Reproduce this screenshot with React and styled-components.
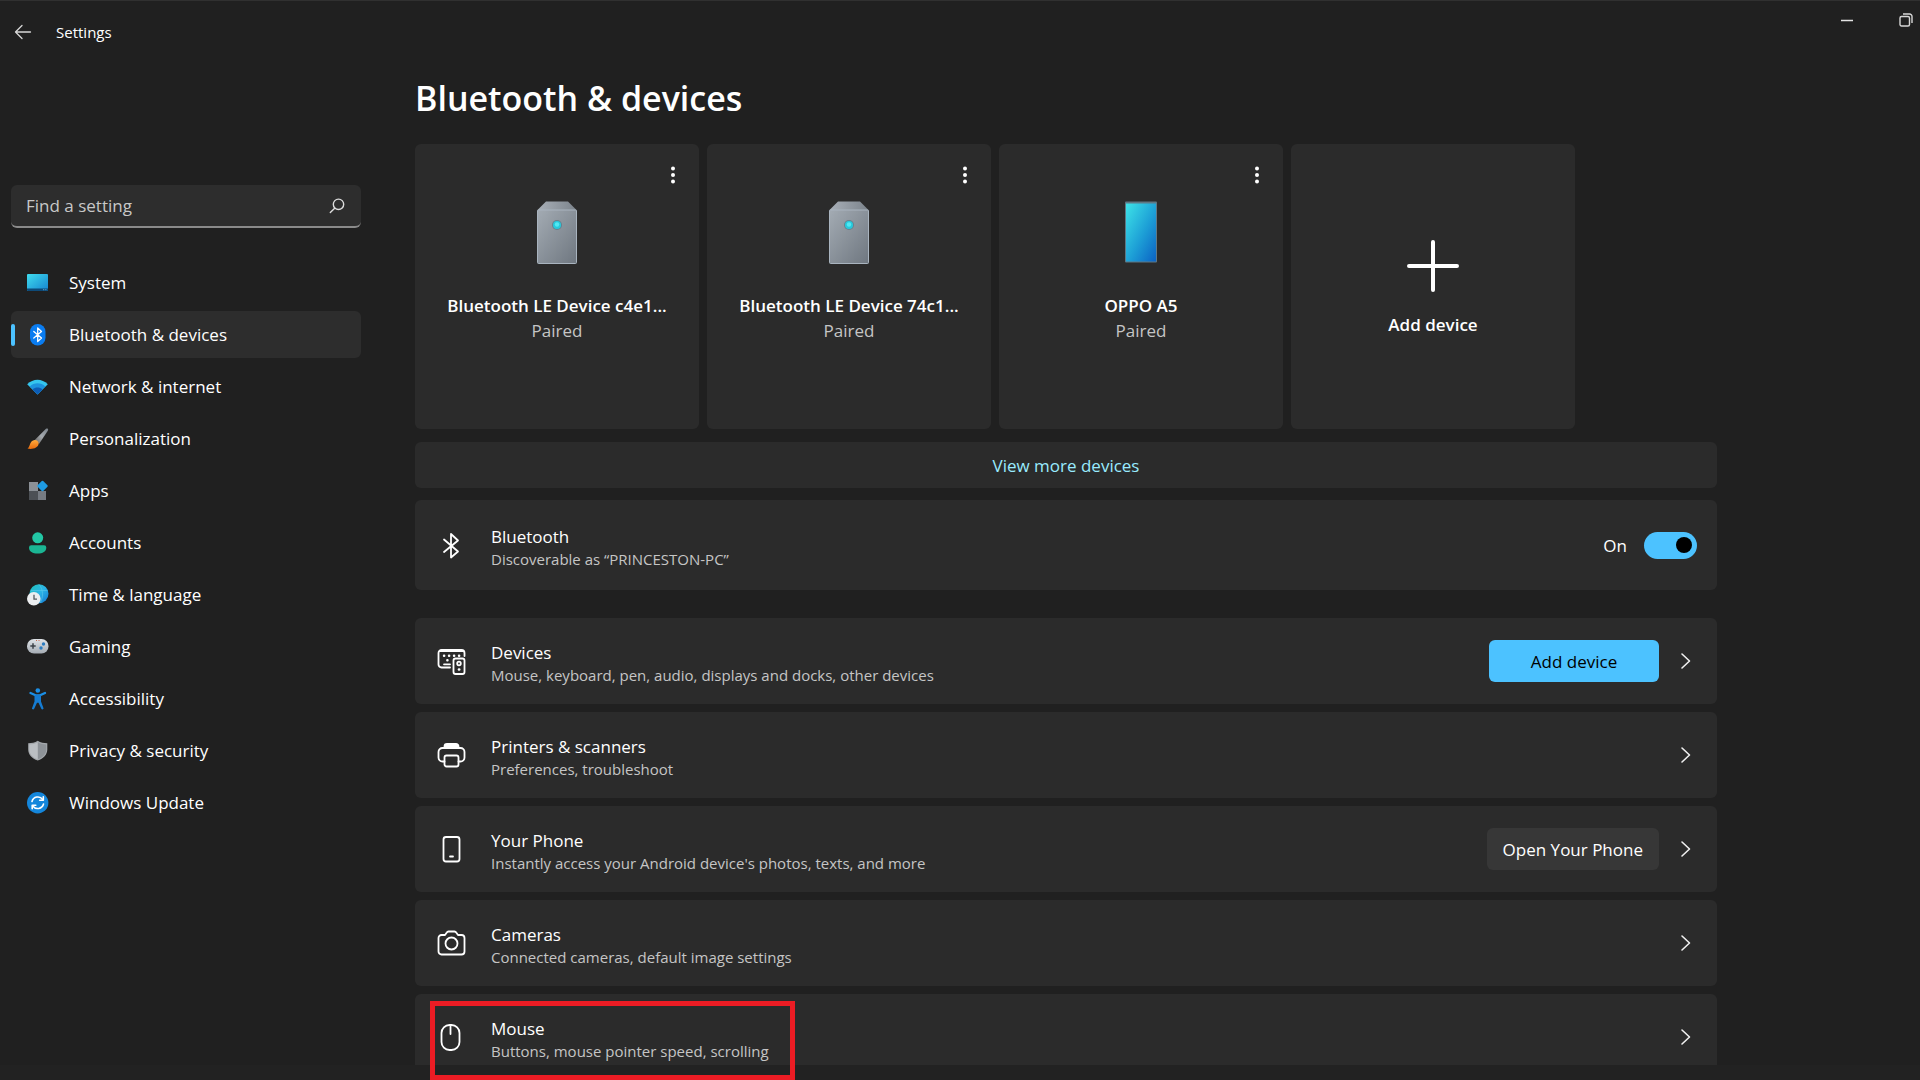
import React from 'react'
import styled, { createGlobalStyle } from 'styled-components';

const navItems = [
    { label: 'System', icon: SystemIcon },
    { label: 'Bluetooth & devices', icon: BluetoothBadgeIcon, active: true },
    { label: 'Network & internet', icon: NetworkIcon },
    { label: 'Personalization', icon: BrushIcon },
    { label: 'Apps', icon: AppsIcon },
    { label: 'Accounts', icon: AccountsIcon },
    { label: 'Time & language', icon: TimeIcon },
    { label: 'Gaming', icon: GamingIcon },
    { label: 'Accessibility', icon: AccessibilityIcon },
    { label: 'Privacy & security', icon: ShieldIcon },
    { label: 'Windows Update', icon: UpdateIcon },
]

const devices = [
    { name: 'Bluetooth LE Device c4e1...', status: 'Paired', icon: TowerIcon },
    { name: 'Bluetooth LE Device 74c1...', status: 'Paired', icon: TowerIcon },
    { name: 'OPPO A5', status: 'Paired', icon: HandsetIcon },
]

const settings = [
    { title: 'Devices', text: 'Mouse, keyboard, pen, audio, displays and docks, other devices', icon: KeyboardIcon, action: 'Add device', primary: true },
    { title: 'Printers & scanners', text: 'Preferences, troubleshoot', icon: PrinterIcon },
    { title: 'Your Phone', text: "Instantly access your Android device's photos, texts, and more", icon: PhoneIcon, action: 'Open Your Phone' },
    { title: 'Cameras', text: 'Connected cameras, default image settings', icon: CameraIcon },
    { title: 'Mouse', text: 'Buttons, mouse pointer speed, scrolling', icon: MouseIcon, highlighted: true },
]

const App = () => {
    return (
        <Window>
            <GlobalStyle/>
            <TitleBar>
                <IconButton aria-label="Back">
                    <svg width="18" height="16" viewBox="0 0 18 16" fill="none" stroke="#d6d6d6" strokeWidth="1.3" strokeLinecap="round" strokeLinejoin="round">
                        <path d="M16.500 8H1.500M8 1.500L1.500 8L8 14.500"/>
                    </svg>
                </IconButton>
                <AppName>Settings</AppName>
                <WindowControls>
                    <IconButton aria-label="Minimize">
                        <svg width="14" height="14" viewBox="0 0 14 14" stroke="#e4e4e4" strokeWidth="1.5">
                            <path d="M1 7.500H13"/>
                        </svg>
                    </IconButton>
                    <IconButton aria-label="Restore">
                        <svg width="14" height="14" viewBox="0 0 14 14" fill="none" stroke="#d6d6d6" strokeWidth="1.4">
                            <rect x="1" y="3.500" width="9.500" height="9.500" rx="1.500"/>
                            <path d="M4 1H10.500A2.500 2.500 0 0 1 13 3.500V10"/>
                        </svg>
                    </IconButton>
                </WindowControls>
            </TitleBar>
            <Body>
                <Sidebar>
                    <SearchBox>
                        <SearchInput type="search" placeholder="Find a setting" aria-label="Find a setting"/>
                        <svg width="16" height="16" viewBox="0 0 16 16" fill="none" stroke="#dcdcdc" strokeWidth="1.4" strokeLinecap="round">
                            <circle cx="9.500" cy="6.300" r="5.200"/>
                            <path d="M5.700 10.200L1.300 14.600"/>
                        </svg>
                    </SearchBox>
                    <Nav>
                        {navItems.map(({ label, icon: Icon, active }) => (
                            <NavLink key={label} href="#" $active={active} aria-current={active ? 'page' : undefined}>
                                <Icon/>
                                {label}
                            </NavLink>
                        ))}
                    </Nav>
                </Sidebar>
                <Main>
                    <Heading>Bluetooth &amp; devices</Heading>
                    <DeviceGrid>
                        {devices.map(({ name, status, icon: Icon }) => (
                            <DeviceCard key={name}>
                                <MoreButton aria-label={`More options for ${name}`}>
                                    <svg width="6" height="18" viewBox="0 0 6 18" fill="#fff">
                                        <circle cx="3" cy="2.500" r="2"/>
                                        <circle cx="3" cy="9" r="2"/>
                                        <circle cx="3" cy="15.500" r="2"/>
                                    </svg>
                                </MoreButton>
                                <Icon/>
                                <DeviceText>
                                    <DeviceName>{name}</DeviceName>
                                    <DeviceStatus>{status}</DeviceStatus>
                                </DeviceText>
                            </DeviceCard>
                        ))}
                        <AddCard>
                            <svg width="52" height="52" viewBox="0 0 52 52" stroke="#fff" strokeWidth="4" strokeLinecap="round">
                                <path d="M26 2V50M2 26H50"/>
                            </svg>
                            <DeviceName as="span">Add device</DeviceName>
                        </AddCard>
                    </DeviceGrid>
                    <ViewMore href="#">View more devices</ViewMore>
                    <BluetoothRow>
                        <RowIcon><BluetoothIcon/></RowIcon>
                        <RowText>
                            <RowTitle>Bluetooth</RowTitle>
                            <RowNote>Discoverable as “PRINCESTON-PC”</RowNote>
                        </RowText>
                        <ToggleLabel>
                            On
                            <Toggle type="checkbox" role="switch" defaultChecked/>
                        </ToggleLabel>
                    </BluetoothRow>
                    <Rows>
                        {settings.map(({ title, text, icon: Icon, action, primary, highlighted }) => (
                            <Row key={title}>
                                <RowIcon><Icon/></RowIcon>
                                <RowText>
                                    <RowTitle>{title}</RowTitle>
                                    <RowNote>{text}</RowNote>
                                </RowText>
                                {action && <ActionButton $primary={primary}>{action}</ActionButton>}
                                <IconButton aria-label={`Open ${title}`}>
                                    <svg width="12" height="18" viewBox="0 0 12 18" fill="none" stroke="#f0f0f0" strokeWidth="1.6" strokeLinecap="round" strokeLinejoin="round">
                                        <path d="M2 2L9.500 9L2 16"/>
                                    </svg>
                                </IconButton>
                                {highlighted && <Highlight/>}
                            </Row>
                        ))}
                    </Rows>
                </Main>
            </Body>
            <BottomEdge/>
        </Window>
    )
}

/* sidebar icons */

function SystemIcon() {
    return (
        <svg width="22" height="22" viewBox="0 0 22 22">
            <defs>
                <linearGradient id="screen" x1="0" y1="0" x2="1" y2="1">
                    <stop offset="0" stopColor="#3fdcee"/>
                    <stop offset="1" stopColor="#1583cf"/>
                </linearGradient>
            </defs>
            <rect x="0" y="2" width="21" height="17" rx="1" fill="url(#screen)"/>
            <path d="M0 16.500H21V18A1 1 0 0 1 20 19H1A1 1 0 0 1 0 18Z" fill="#0d4a78"/>
            <path d="M16 17.700H17.300M18.200 17.700H19.500" stroke="#6fb6e0" strokeWidth="0.800"/>
        </svg>
    )
}

function BluetoothBadgeIcon() {
    return (
        <svg width="22" height="22" viewBox="0 0 22 22">
            <rect x="3" y="0" width="15.500" height="21.500" rx="7.700" fill="#0a7cf0"/>
            <path d="M6.800 7.500L14.500 14L10.700 17.500V4L14.500 7.500L6.800 14" fill="none" stroke="#fff" strokeWidth="1.300" strokeLinejoin="round" strokeLinecap="round"/>
        </svg>
    )
}

function NetworkIcon() {
    return (
        <svg width="22" height="22" viewBox="0 0 22 22">
            <path d="M0.200 8.200C6 2.200 15 2.200 20.800 8.200L10.500 18.500Z" fill="#35c5ee"/>
            <path d="M2.700 10.600C7.200 6.200 13.800 6.200 18.300 10.600L10.500 18.500Z" fill="#1d93de"/>
            <path d="M5.500 13.400C8.500 10.800 12.500 10.800 15.500 13.400L10.500 18.500Z" fill="#0c5cb5"/>
        </svg>
    )
}

function BrushIcon() {
    return (
        <svg width="22" height="22" viewBox="0 0 22 22">
            <defs>
                <linearGradient id="handle" x1="1" y1="0" x2="0" y2="1">
                    <stop offset="0" stopColor="#7b838b"/>
                    <stop offset="0.500" stopColor="#a3a8ad"/>
                    <stop offset="1" stopColor="#64605c"/>
                </linearGradient>
                <linearGradient id="bristle" x1="0" y1="0" x2="0" y2="1">
                    <stop offset="0" stopColor="#ffab3d"/>
                    <stop offset="1" stopColor="#e76a0c"/>
                </linearGradient>
            </defs>
            <path d="M19 0.800C20.500 -0.200 21.800 1 20.800 2.700L12 16L7.500 12.200Z" fill="url(#handle)"/>
            <path d="M7.800 12C10 12 11.800 13.700 11.600 15.800C11.200 20 5.500 21.700 0.500 20.600C3.500 18.800 2.300 12.500 7.800 12Z" fill="url(#bristle)"/>
        </svg>
    )
}

function AppsIcon() {
    return (
        <svg width="22" height="22" viewBox="0 0 22 22">
            <rect x="2" y="2" width="9" height="9" fill="#8b9096"/>
            <rect x="2" y="11" width="9" height="9" fill="#4c5055"/>
            <rect x="11" y="11" width="8" height="9" fill="#767b82"/>
            <rect x="11.500" y="2" width="8" height="8" rx="1" transform="rotate(45 15.500 6)" fill="#1e9be3"/>
        </svg>
    )
}

function AccountsIcon() {
    return (
        <svg width="22" height="22" viewBox="0 0 22 22">
            <circle cx="10.700" cy="5.800" r="5.500" fill="#22c7a5"/>
            <path d="M2 15.500A2.300 2.300 0 0 1 4.300 13.200H17A2.300 2.300 0 0 1 19.300 15.500C19.300 19.500 15.700 21.500 10.700 21.500S2 19.500 2 15.500Z" fill="#1bb593"/>
        </svg>
    )
}

function TimeIcon() {
    return (
        <svg width="22" height="22" viewBox="0 0 22 22">
            <defs>
                <linearGradient id="globe" x1="0" y1="0" x2="1" y2="1">
                    <stop offset="0" stopColor="#1fc1b5"/>
                    <stop offset="0.500" stopColor="#2bb4e6"/>
                    <stop offset="1" stopColor="#1274cf"/>
                </linearGradient>
            </defs>
            <circle cx="12" cy="9.700" r="9.500" fill="url(#globe)"/>
            <path d="M4 6.500H20.500M12 0.500C16.500 5 16.500 14 13 19" fill="none" stroke="#5cc8ea" strokeWidth="0.600"/>
            <circle cx="6.800" cy="14.700" r="6.800" fill="#eceef0"/>
            <path d="M7 10.800V15.200H10" fill="none" stroke="#55595e" strokeWidth="1.300"/>
        </svg>
    )
}

function GamingIcon() {
    return (
        <svg width="22" height="22" viewBox="0 0 22 22">
            <defs>
                <linearGradient id="pad" x1="0" y1="0" x2="0" y2="1">
                    <stop offset="0" stopColor="#dfe3e7"/>
                    <stop offset="1" stopColor="#a5acb4"/>
                </linearGradient>
            </defs>
            <rect x="0" y="3" width="21.500" height="14.500" rx="7" fill="url(#pad)"/>
            <path d="M6 7.300V12.700M3.300 10H8.700" stroke="#3c4248" strokeWidth="1.500"/>
            <circle cx="16.500" cy="8" r="1.700" fill="#2b7cc0"/>
            <circle cx="14" cy="12" r="1.700" fill="#2b7cc0"/>
            <path d="M9 4.500H10M11.500 4.500H12.500" stroke="#c86a50" strokeWidth="1"/>
        </svg>
    )
}

function AccessibilityIcon() {
    return (
        <svg width="22" height="22" viewBox="0 0 22 22">
            <circle cx="10.800" cy="2.500" r="2.300" fill="#1b8fe6"/>
            <path d="M3.500 5L8.500 7.300H13L18 5" fill="none" stroke="#1b8fe6" strokeWidth="2.300" strokeLinecap="round" strokeLinejoin="round"/>
            <path d="M7.500 7H14V13.500L16.500 20.300C16.800 21.500 14.800 22 14.300 20.800L11.500 14.800H10L7.200 20.800C6.700 22 4.700 21.500 5 20.300L7.500 13.500Z" fill="#157cd2"/>
        </svg>
    )
}

function ShieldIcon() {
    return (
        <svg width="22" height="22" viewBox="0 0 22 22">
            <path d="M10.700 0.800C13.500 2.700 17 3.200 20.300 3.200V9.500C20.300 14.500 16.500 18.500 10.700 20.500C5 18.500 1.200 14.500 1.200 9.500V3.200C4.500 3.200 8 2.700 10.700 0.800Z" fill="#a4a8ac"/>
            <path d="M10.700 2.300C13.300 4 16.300 4.500 19.200 4.500V9.500C19.200 14 15.800 17.500 10.700 19.300Z" fill="#8e9398"/>
            <path d="M10.700 2.300C8.200 4 5.200 4.500 2.300 4.500V9.500C2.300 14 5.700 17.500 10.700 19.300Z" fill="#bbbfc3"/>
        </svg>
    )
}

function UpdateIcon() {
    return (
        <svg width="22" height="22" viewBox="0 0 22 22">
            <circle cx="10.700" cy="10.700" r="10.700" fill="#1486db"/>
            <path d="M5 9.500A6 6 0 0 1 15.700 7.500M16.500 12A6 6 0 0 1 5.800 14" fill="none" stroke="#fff" strokeWidth="1.600" strokeLinecap="round"/>
            <path d="M16.300 4.700V8.300H12.700M5.200 16.800V13.200H8.800" fill="none" stroke="#fff" strokeWidth="1.600" strokeLinecap="round" strokeLinejoin="round"/>
        </svg>
    )
}

/* device card pictures */

function TowerIcon() {
    return (
        <svg width="40" height="64" viewBox="0 0 40 64">
            <defs>
                <linearGradient id="tower" x1="0" y1="0" x2="1" y2="1">
                    <stop offset="0" stopColor="#a3abb3"/>
                    <stop offset="1" stopColor="#6f7780"/>
                </linearGradient>
                <linearGradient id="towerTop" x1="0" y1="0" x2="1" y2="0">
                    <stop offset="0" stopColor="#a9b0b8"/>
                    <stop offset="1" stopColor="#7b838b"/>
                </linearGradient>
            </defs>
            <path d="M9 0.500H31L40 9.500H0Z" fill="url(#towerTop)"/>
            <rect x="0.500" y="9" width="39" height="53.500" rx="1" fill="url(#tower)" stroke="#a9b4bf"/>
            <circle cx="20" cy="24" r="5" fill="#67808d"/>
            <circle cx="20" cy="24" r="4" fill="#27c9dc"/>
            <circle cx="20" cy="23.500" r="2.200" fill="#52e8f2"/>
        </svg>
    )
}

function HandsetIcon() {
    return (
        <svg width="32" height="64" viewBox="0 0 32 64">
            <defs>
                <linearGradient id="handset" x1="0" y1="0" x2="1" y2="1">
                    <stop offset="0" stopColor="#3de3e8"/>
                    <stop offset="0.550" stopColor="#1d9fd6"/>
                    <stop offset="1" stopColor="#0b62c4"/>
                </linearGradient>
            </defs>
            <rect x="0" y="0.500" width="32" height="61" rx="1" fill="#5f7885"/>
            <rect x="1" y="2.500" width="30" height="58" fill="url(#handset)"/>
        </svg>
    )
}

/* settings row icons */

function BluetoothIcon() {
    return (
        <LineIcon>
            <path d="M7 8.500L21 20.500L14 26.500V3L21 9.500L7 21"/>
        </LineIcon>
    )
}

function KeyboardIcon() {
    return (
        <LineIcon>
            <path d="M13 20.500H4.500A3 3 0 0 1 1.500 17.500V6A3 3 0 0 1 4.500 3H24.500A3 3 0 0 1 27.500 6V9"/>
            <path d="M3 4.200H26M7 17.300H13"/>
            <path d="M7 8.700H7.200M12 8.700H12.200M17 8.700H17.200M22 8.700H22.200M10.300 13.200H10.500" strokeWidth="2.400"/>
            <rect x="16.500" y="11.500" width="11" height="15.500" rx="2"/>
            <circle cx="22" cy="16.500" r="1.800"/>
            <path d="M22 22.500H22.200" strokeWidth="2.600"/>
        </LineIcon>
    )
}

function PrinterIcon() {
    return (
        <LineIcon>
            <path d="M7.500 20.500H5.500A4 4 0 0 1 1.500 16.500V11A4 4 0 0 1 5.500 7H23.500A4 4 0 0 1 27.500 11V16.500A4 4 0 0 1 23.500 20.500H21.500"/>
            <path d="M7.500 6.500V5.500A2.500 2.500 0 0 1 10 3H19A2.500 2.500 0 0 1 21.500 5.500V6.500M8.500 5H20.500"/>
            <rect x="7.500" y="14.500" width="14" height="11" rx="2"/>
        </LineIcon>
    )
}

function PhoneIcon() {
    return (
        <LineIcon>
            <rect x="6.500" y="2" width="16" height="24.500" rx="2.500"/>
            <path d="M13 21.500H16"/>
        </LineIcon>
    )
}

function CameraIcon() {
    return (
        <LineIcon>
            <path d="M4.500 6H8L9.800 3.500A2 2 0 0 1 11.500 2.500H17.500A2 2 0 0 1 19.200 3.500L21 6H24.500A3 3 0 0 1 27.500 9V22.500A3 3 0 0 1 24.500 25.500H4.500A3 3 0 0 1 1.500 22.500V9A3 3 0 0 1 4.500 6Z"/>
            <circle cx="14.500" cy="14.500" r="6"/>
        </LineIcon>
    )
}

function MouseIcon() {
    return (
        <LineIcon>
            <rect x="4.500" y="2" width="18" height="25" rx="8"/>
            <path d="M13.500 2V11"/>
        </LineIcon>
    )
}

const GlobalStyle = createGlobalStyle`
    body {
        margin: 0;
        background: #202020;
        color: #ffffff;
        font-family: 'Open Sans', 'Noto Sans', sans-serif;
        font-size: 17px;
    }
    *, *::before, *::after {
        box-sizing: border-box;
    }
    button, input {
        font: inherit;
        color: inherit;
    }
    svg {
        display: block;
        flex-shrink: 0;
    }
`

const Window = styled.div`
    position: relative;
    height: 100vh;
    overflow: hidden;
    border-top: 1px solid #303030;
`

const TitleBar = styled.header`
    display: flex;
    align-items: center;
    height: 61px;
    padding-left: 8px;
`

const IconButton = styled.button`
    display: flex;
    align-items: center;
    justify-content: center;
    width: 29px;
    height: 38px;
    padding: 0;
    border: none;
    background: none;
`

const AppName = styled.span`
    margin-left: 19px;
    font-size: 15px;
`

const WindowControls = styled.div`
    display: flex;
    align-self: flex-start;
    gap: 30px;
    margin-left: auto;
`

const Body = styled.div`
    display: flex;
    gap: 54px;
`

const Sidebar = styled.aside`
    flex: 0 0 361px;
    padding: 123px 0 0 11px;
`

const SearchBox = styled.label`
    display: flex;
    align-items: center;
    height: 43px;
    padding: 0 16px 0 15px;
    border-bottom: 2px solid #8a8a8a;
    border-radius: 6px;
    background: #2d2d2d;
`

const SearchInput = styled.input`
    flex: 1;
    min-width: 0;
    padding: 0;
    border: none;
    outline: none;
    background: none;
    &::placeholder {
        color: #c8c8c8;
        opacity: 1;
    }
`

const Nav = styled.nav`
    display: flex;
    flex-direction: column;
    gap: 5px;
    margin-top: 31px;
`

const NavLink = styled.a`
    position: relative;
    display: flex;
    align-items: center;
    gap: 20px;
    height: 47px;
    padding-left: 16px;
    border-radius: 6px;
    color: #ffffff;
    text-decoration: none;
    background: ${({ $active }) => ($active ? '#2d2d2d' : 'none')};
    &::before {
        content: '';
        display: ${({ $active }) => ($active ? 'block' : 'none')};
        position: absolute;
        left: 0;
        width: 4px;
        height: 22px;
        border-radius: 2px;
        background: #4cc2ff;
    }
`

const Main = styled.main`
    flex: 1;
    max-width: 1302px;
    padding-top: 12px;
`

const Heading = styled.h1`
    margin: 0 0 22px;
    font-size: 34px;
    font-weight: 600;
    line-height: 48px;
`

const DeviceGrid = styled.div`
    display: grid;
    grid-template-columns: repeat(auto-fill, 284px);
    gap: 8px;
`

const DeviceCard = styled.article`
    position: relative;
    display: flex;
    flex-direction: column;
    align-items: center;
    gap: 28px;
    height: 285px;
    padding-top: 57px;
    border-radius: 6px;
    background: #2b2b2b;
`

const AddCard = styled.button`
    display: flex;
    flex-direction: column;
    align-items: center;
    gap: 20px;
    height: 285px;
    padding: 96px 0 0;
    border: none;
    border-radius: 6px;
    background: #2b2b2b;
`

const MoreButton = styled(IconButton)`
    position: absolute;
    top: 12px;
    right: 12px;
`

const DeviceText = styled.div`
    line-height: 25px;
    text-align: center;
`

const DeviceName = styled.h2`
    margin: 0;
    font-size: 17px;
    font-weight: 600;
    line-height: 25px;
`

const DeviceStatus = styled.p`
    margin: 0;
    color: #c5c5c5;
`

const Panel = styled.div`
    display: flex;
    align-items: center;
    border-radius: 6px;
    background: #2b2b2b;
`

const ViewMore = styled.a`
    display: flex;
    align-items: center;
    justify-content: center;
    height: 46px;
    margin-top: 13px;
    border-radius: 6px;
    background: #2b2b2b;
    color: #99ebff;
    text-decoration: none;
`

const BluetoothRow = styled(Panel)`
    height: 90px;
    margin: 12px 0 28px;
    padding: 0 20px 0 22px;
`

const Rows = styled.div`
    display: flex;
    flex-direction: column;
    gap: 8px;
`

const Row = styled(Panel)`
    position: relative;
    height: 86px;
    padding: 0 17px 0 22px;
`

const RowIcon = styled.div`
    width: 54px;
`

const LineIcon = styled.svg.attrs({ viewBox: '0 0 29 29' })`
    width: 29px;
    height: 29px;
    fill: none;
    stroke: #ffffff;
    stroke-width: 1.8;
    stroke-linecap: round;
    stroke-linejoin: round;
`

const RowText = styled.div`
    flex: 1;
    padding-top: 6px;
    line-height: 22px;
`

const RowTitle = styled.h2`
    margin: 0;
    font-size: 17px;
    font-weight: 400;
`

const RowNote = styled.p`
    margin: 0;
    color: #c5c5c5;
    font-size: 15px;
`

const ToggleLabel = styled.label`
    display: flex;
    align-items: center;
    gap: 17px;
`

const Toggle = styled.input`
    appearance: none;
    display: flex;
    align-items: center;
    justify-content: flex-end;
    width: 53px;
    height: 27px;
    margin: 0;
    padding-right: 5px;
    border-radius: 14px;
    background: #4cc2ff;
    &::before {
        content: '';
        width: 16px;
        height: 16px;
        border-radius: 50%;
        background: #000000;
    }
    &:not(:checked) {
        justify-content: flex-start;
        background: #555555;
    }
`

const ActionButton = styled.button`
    min-width: 170px;
    height: 42px;
    margin-right: 12px;
    padding: 0 16px;
    border: none;
    border-radius: 6px;
    background: ${({ $primary }) => ($primary ? '#4cc2ff' : '#373737')};
    color: ${({ $primary }) => ($primary ? '#000000' : '#ffffff')};
`

const Highlight = styled.div`
    position: absolute;
    z-index: 2;
    top: 7px;
    bottom: 0;
    left: 15px;
    width: 365px;
    border: 5px solid #ec1c24;
    pointer-events: none;
`

const BottomEdge = styled.div`
    position: absolute;
    z-index: 1;
    bottom: 0;
    width: 100%;
    height: 15px;
    background: #222222;
`

export default App
